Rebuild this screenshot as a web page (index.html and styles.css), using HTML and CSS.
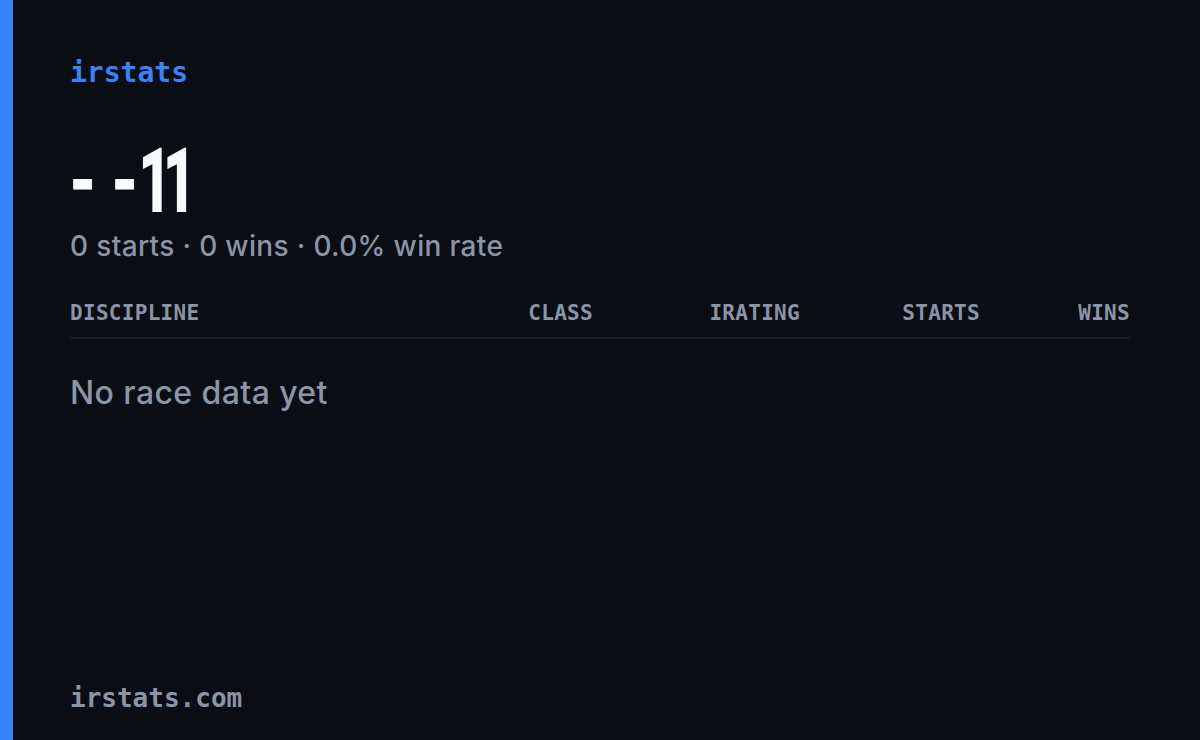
FILE: index.html
```html
<!DOCTYPE html>
<html>
<head>
<meta charset="utf-8">
<link rel="stylesheet" href="styles.css">
</head>
<body>
<div class="card">
  <div class="brand">irstats</div>
  <div class="hero">
    <div class="name"><span class="name-dash">- -</span><span class="name-num">11</span></div>
    <div class="summary">0 starts · 0 wins · 0.0% win rate</div>
  </div>
  <div class="table">
    <div class="thead">
      <div class="th left">DISCIPLINE</div>
      <div class="th">CLASS</div>
      <div class="th">IRATING</div>
      <div class="th">STARTS</div>
      <div class="th">WINS</div>
    </div>
    <div class="empty">No race data yet</div>
  </div>
  <div class="footer">irstats.com</div>
</div>
</body>
</html>
```
FILE: styles.css
```css
html, body {
  margin: 0;
  padding: 0;
  background: #0a0d14;
}
.card {
  width: 1200px;
  height: 740px;
  box-sizing: border-box;
  border-left: 13px solid #3b82f6;
  padding: 56px 70px 26px 57px;
  display: flex;
  flex-direction: column;
  background: #0a0d14;
  font-family: Inter, Roboto, "Noto Sans", sans-serif;
}
.brand {
  font-family: "DejaVu Sans Mono", monospace;
  font-size: 28px;
  font-weight: 600;
  color: #3b82f6;
  line-height: 34px;
}
.hero {
  margin-top: 48px;
}
.name {
  font-family: Roboto, sans-serif;
  font-weight: 700;
  font-size: 87px;
  line-height: 86px;
  color: #f8fafc;
  white-space: pre;
  transform: scaleX(0.75);
  transform-origin: left center;
}
.name-dash {
  display: inline-block;
  -webkit-text-stroke: 1px #f8fafc;
}
.name-num {
  display: inline-block;
  letter-spacing: -12px;
  margin-left: 2px;
  transform: scaleX(0.86);
  transform-origin: left center;
  -webkit-text-stroke: 2px #f8fafc;
}
.summary {
  font-size: 28px;
  font-weight: 500;
  color: #8b95a8;
  line-height: 36px;
  margin-top: 4px;
  letter-spacing: 0.35px;
}
.table {
  margin-top: 36px;
}
.thead {
  display: grid;
  grid-template-columns: 1fr 120px 207px 180px 150px;
  border-bottom: 2px solid #161a24;
  padding-bottom: 11px;
}
.th {
  font-family: "DejaVu Sans Mono", monospace;
  font-weight: 700;
  font-size: 21px;
  letter-spacing: 0.3px;
  color: #8b95a8;
  text-align: right;
  line-height: 26px;
}
.th.left {
  text-align: left;
}
.empty {
  margin-top: 34px;
  font-size: 32px;
  font-weight: 500;
  color: #8b95a8;
  line-height: 40px;
  letter-spacing: 0.4px;
}
.footer {
  margin-top: auto;
  font-family: "DejaVu Sans Mono", monospace;
  font-weight: 700;
  font-size: 26px;
  color: #8b95a8;
  line-height: 32px;
}
```
